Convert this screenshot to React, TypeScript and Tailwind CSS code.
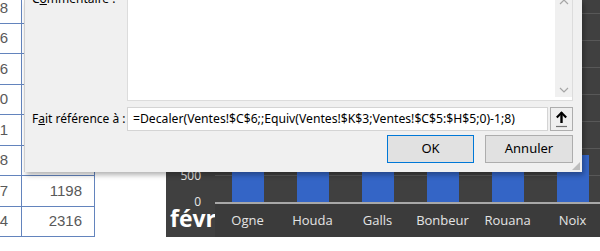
import React from "react"

const colA = ["8", "6", "6", "0", "1", "8", "7", "4"]
const colB = ["", "", "", "", "", "", "1198", "2316"]
const rowHeights = [31, 30, 31, 30, 31, 30, 31, 30]

const bars = [
  { name: "Ogne", h: 65 },
  { name: "Houda", h: 125 },
  { name: "Galls", h: 80 },
  { name: "Bonbeur", h: 110 },
  { name: "Rouana", h: 95 },
  { name: "Noix", h: 47 },
]

function Sheet() {
  return (
    <div className="w-[95px] -mt-[7px] font-['Liberation_Sans',sans-serif] text-[15px] text-[#595959]">
      {colA.map((a, i) => (
        <div key={i} className="flex border-b border-[#6384bd]" style={{ height: rowHeights[i] }}>
          <div className="w-[22px] flex items-center justify-end pr-[13px] border-r border-[#6384bd]">{a}</div>
          <div className="w-[73px] flex items-center justify-end pr-[12px] border-r border-[#6384bd]">{colB[i]}</div>
        </div>
      ))}
    </div>
  )
}

function Chart() {
  return (
    <div className="ml-[71px] w-[440px] h-[237px] flex bg-[#404040] font-['Open_Sans',sans-serif]">
      {/* axis column */}
      <div className="w-[49px] flex flex-col items-end pr-[14px] text-[12px] text-[#e8e8e8]">
        <div className="mt-[169px] h-[14px] leading-[14px]">500</div>
        <div className="mt-[12px] h-[14px] leading-[14px]">0</div>
        <div className="self-start ml-[4px] -mt-[5px] text-[23px] font-bold leading-[28px] text-white">févr</div>
      </div>
      {/* plot */}
      <div className="flex flex-col">
        <div className="h-[204px] flex border-b-2 border-[#a8a8a8] bg-[repeating-linear-gradient(to_top,transparent_0,transparent_26px,#585858_26px,#585858_27px)]">
          {bars.map((b) => (
            <div key={b.name} className="w-[65px] flex items-end justify-center">
              <div className="w-[32px] bg-[#3465c6]" style={{ height: b.h }} />
            </div>
          ))}
        </div>
        <div className="flex-1 flex bg-[#3b3b3b]">
          {bars.map((b) => (
            <div key={b.name} className="w-[65px] flex items-center justify-center text-[13px] text-[#e4e4e4]">
              {b.name}
            </div>
          ))}
        </div>
      </div>
    </div>
  )
}

function Dialog() {
  return (
    <div className="absolute left-[24px] top-0 w-[558px] h-[172px] bg-[#f0f0f0] border-l border-[#cfcfcf] shadow-[2px_3px_5px_rgba(0,0,0,0.3)] pl-[7px] pr-[9px] font-['Noto_Sans',sans-serif] text-[12px] text-black">
      {/* Commentaire */}
      <div className="flex h-[101px]">
        <div className="w-[95px] -mt-[10px] leading-[17px]">
          C<span className="underline">o</span>mmentaire :
        </div>
        <div className="flex-1 flex bg-white border border-t-0 border-[#dcdcdc]">
          <div className="flex-1" />
          <div className="w-[17px] mb-[3px] bg-[#f0f0f0] flex flex-col items-center justify-between">
            <svg width="10" height="6" viewBox="0 0 10 6" className="-mt-[1px]">
              <path d="M1 5 L5 1 L9 5" fill="none" stroke="#a6a6a6" strokeWidth="1.2" />
            </svg>
            <svg width="10" height="6" viewBox="0 0 10 6" className="mb-[4px]">
              <path d="M1 1 L5 5 L9 1" fill="none" stroke="#a6a6a6" strokeWidth="1.2" />
            </svg>
          </div>
        </div>
      </div>
      {/* Fait reference */}
      <div className="flex items-center h-[24px] mt-[6px]">
        <div className="w-[95px]">
          F<span className="underline">a</span>it référence à :
        </div>
        <div className="flex-1 h-full flex items-center bg-white border border-[#d4d4d4] pl-[5px] text-[12.2px] whitespace-nowrap overflow-hidden">
          =Decaler(Ventes!$C$6;;Equiv(Ventes!$K$3;Ventes!$C$5:$H$5;0)-1;8)
        </div>
        <div className="ml-[2px] w-[23px] h-full flex items-center justify-center bg-[#efefef] border border-[#adadad]">
          <svg width="13" height="17" viewBox="0 0 13 17">
            <path d="M6.5 1.5 V12" stroke="#000" strokeWidth="2.4" />
            <path d="M1.8 6.5 L6.5 1.8 L11.2 6.5" fill="none" stroke="#000" strokeWidth="2.2" />
            <path d="M1 15.5 H12" stroke="#707070" strokeWidth="1.2" />
          </svg>
        </div>
      </div>
      {/* buttons */}
      <div className="flex justify-end gap-[11px] mt-[4px]">
        <button className="w-[87px] h-[28px] bg-[#e1e1e1] border border-[#0078d7] text-[13px]">OK</button>
        <button className="w-[88px] h-[28px] bg-[#e1e1e1] border border-[#adadad] text-[13px]">Annuler</button>
      </div>
      {/* resize grip */}
      <svg width="10" height="10" viewBox="0 0 10 10" className="absolute right-[1px] bottom-[1px]">
        <path d="M9 1 L9 9 L1 9 Z" fill="#bdbdbd" />
      </svg>
    </div>
  )
}

export default function App() {
  return (
    <div className="relative w-[600px] h-[251px] overflow-hidden bg-white">
      <div className="flex">
        <Sheet />
        <Chart />
      </div>
      <Dialog />
    </div>
  )
}
